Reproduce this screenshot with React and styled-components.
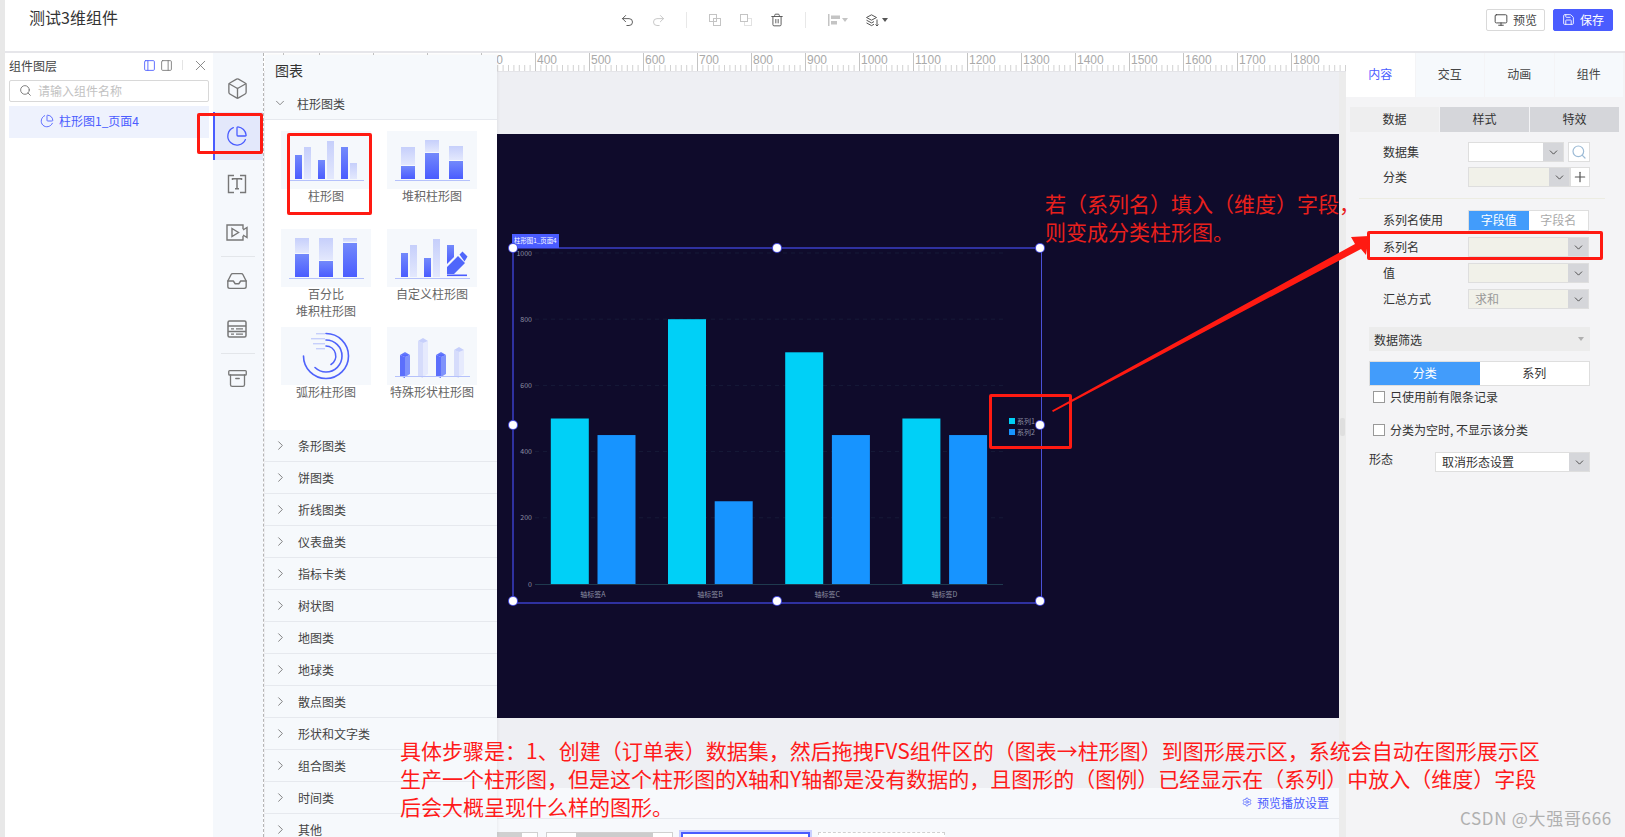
import { createGlobalStyle } from "styled-components";
import styled from "styled-components";
import {
  Archive,
  Box,
  ChartPie,
  ChevronDown,
  ChevronRight,
  Inbox,
  Monitor,
  PanelLeft,
  PanelRight,
  Plus,
  Redo2,
  Save,
  Search,
  Settings,
  Trash2,
  Undo2,
  X,
} from "lucide-react";

const FONT = `"Noto Sans CJK SC", "Liberation Sans", sans-serif`;
const BLUE = "#4a5cff";
const SKY = "#429cfb";

const GlobalStyle = createGlobalStyle`
  html, body {
    margin: 0;
    padding: 0;
    background: #fff;
    font-family: ${FONT};
    font-size: 12px;
    color: #333;
    overflow: hidden;
  }
  * { box-sizing: border-box; }
`;

const Page = styled.div`
  position: relative;
  display: flex;
  width: 1625px;
  height: 837px;
  overflow: hidden;
`;

const EdgeStrip = styled.div`
  width: 5px;
  flex: none;
  background: #e8e8e8;
`;

const Shell = styled.div`
  flex: 1;
  min-width: 0;
  display: flex;
  flex-direction: column;
`;

/* ---------- header ---------- */

const Header = styled.header`
  height: 53px;
  flex: none;
  display: flex;
  align-items: flex-start;
  background: #fff;
  border-bottom: 2px solid #e6e6ea;
`;

const Title = styled.div`
  width: 607px;
  padding: 5px 0 0 24px;
  font-size: 16px;
  line-height: 24px;
  color: #333;
`;

const Toolbar = styled.div`
  display: flex;
  align-items: center;
  gap: 1px;
  height: 20px;
  margin-top: 10px;
`;

const ToolButton = styled.span`
  display: flex;
  align-items: center;
  justify-content: center;
  gap: 2px;
  width: ${(p) => p.$w || 30}px;
  height: 20px;
  color: ${(p) => (p.$off ? "#c4c4c4" : "#555")};
`;

const ToolSep = styled.span`
  width: 1px;
  height: 16px;
  margin: 0 12px;
  background: #e8e8e8;
`;

const Caret = styled.span`
  width: 0;
  height: 0;
  border-left: 3px solid transparent;
  border-right: 3px solid transparent;
  border-top: 4px solid ${(p) => p.$color || "#555"};
`;

const Actions = styled.div`
  margin-left: auto;
  margin-right: 12px;
  margin-top: 9px;
  display: flex;
  gap: 8px;
`;

const ActionButton = styled.button`
  display: flex;
  align-items: center;
  justify-content: center;
  gap: 5px;
  width: ${(p) => (p.$primary ? 60 : 59)}px;
  height: 22px;
  padding: 0 0 1px;
  font: 12px ${FONT};
  border-radius: 2px;
  border: 1px solid ${(p) => (p.$primary ? BLUE : "#d9d9d9")};
  background: ${(p) => (p.$primary ? BLUE : "#fff")};
  color: ${(p) => (p.$primary ? "#fff" : "#444")};
`;

const Workspace = styled.div`
  flex: 1;
  min-height: 0;
  display: flex;
`;

/* ---------- layers panel ---------- */

const LayerPanel = styled.aside`
  width: 208px;
  flex: none;
  padding: 0 4px;
  background: #fff;
`;

const LayerHead = styled.div`
  height: 27px;
  display: flex;
  align-items: center;
  color: #444;
`;

const LayerTitle = styled.span`
  flex: 1;
  padding-bottom: 2px;
`;

const LayerTools = styled.div`
  display: flex;
  align-items: center;
  gap: 4px;
  margin-top: -3px;
  color: #777;
`;

const ToolsDivider = styled.span`
  width: 1px;
  height: 10px;
  margin: 0 5px;
  background: #e4e4e4;
`;

const LayerSearch = styled.div`
  display: flex;
  align-items: center;
  gap: 6px;
  height: 22px;
  padding: 0 0 2px 9px;
  border: 1px solid #d8d8d8;
  border-radius: 2px;
  color: #c2c2c2;
  svg {
    color: #666;
  }
`;

const LayerRow = styled.div`
  display: flex;
  align-items: center;
  gap: 5px;
  height: 32px;
  margin-top: 4px;
  padding: 0 0 3px 31px;
  background: #eef2fd;
  color: ${BLUE};
`;

/* ---------- icon rail ---------- */

const Rail = styled.nav`
  width: 50px;
  flex: none;
  padding-top: 11px;
  background: #f5f8fc;
`;

const RailItem = styled.div`
  height: 48px;
  display: flex;
  align-items: center;
  justify-content: center;
  padding-right: 4px;
  color: ${(p) => (p.$active ? BLUE : "#777")};
  background: ${(p) => (p.$active ? "#e3e8fb" : "transparent")};
  border-left: 2px solid ${(p) => (p.$active ? BLUE : "transparent")};
`;

const RailSep = styled.div`
  height: 1px;
  margin: 0 8px;
  background: #e3e6ea;
`;

/* ---------- centre ---------- */

const Main = styled.main`
  position: relative;
  flex: 1;
  min-width: 0;
  display: flex;
  flex-direction: column;
  border-left: 1px dashed #b5b5b5;
  background: #fff;
`;

const RulerBar = styled.svg`
  display: block;
  flex: none;
  width: 100%;
  height: 19px;
`;

const WorkArea = styled.div`
  position: relative;
  flex: 1;
  min-height: 0;
  display: flex;
  flex-direction: column;
  padding: 62px 0 0 233px;
  background: #eeeff3;
  border-right: 7px solid #ececec;
`;

const ScrollGrip = styled.span`
  position: absolute;
  right: -6px;
  top: 346px;
  width: 5px;
  height: 18px;
  border-radius: 2px;
  background: #dfdfdf;
`;

const Stage = styled.div`
  position: relative;
  flex: none;
  height: 584px;
  background: #0f0b2b;
`;

const SelectFrame = styled.div`
  position: absolute;
  left: 15px;
  top: 113px;
  width: 530px;
  height: 357px;
  border: 2px solid #2f31a0;
  border-right: 1px solid #4a50d8;
`;

const ChartSvg = styled.svg`
  position: absolute;
  left: -1px;
  top: -1px;
  width: 529px;
  height: 356px;
  overflow: visible;
`;

const FrameTag = styled.span`
  position: absolute;
  left: -2px;
  top: -15px;
  width: 47px;
  height: 14px;
  padding-left: 2px;
  font-size: 6.4px;
  line-height: 13px;
  color: #fff;
  white-space: nowrap;
  background: ${BLUE};
`;

const Handle = styled.span`
  position: absolute;
  left: ${(p) => p.$x}%;
  top: ${(p) => p.$y}%;
  width: 8px;
  height: 8px;
  margin: -5px 0 0 -5px;
  border-radius: 50%;
  background: #fff;
  box-shadow: 0 0 0 1px #4c50e0;
`;

const BottomBar = styled.div`
  flex: none;
  margin-top: 70px;
  height: 49px;
  background: #f7f9fc;
`;

const BarTop = styled.div`
  height: 31px;
  display: flex;
  align-items: center;
  justify-content: flex-end;
  gap: 5px;
  padding: 0 10px 2px 0;
  font-size: 12px;
  color: ${BLUE};
  border-bottom: 1px solid #e6e9ee;
`;

const Thumbs = styled.div`
  display: flex;
  gap: 8px;
  padding-top: 13px;
`;

const Thumb = styled.div`
  width: ${(p) => p.$w}px;
  height: 60px;
  flex: none;
  background: ${(p) => p.$fill || "#fff"};
  border: 1px ${(p) => (p.$dashed ? "dashed" : "solid")} #d0d0d0;
  ${(p) =>
    p.$selected &&
    `
    border: 2px solid ${BLUE};
    box-shadow: 0 0 0 2px #c9cfff;
  `}
`;

/* ---------- chart flyout ---------- */

const Flyout = styled.section`
  position: absolute;
  z-index: 1;
  left: 1px;
  top: 2px;
  bottom: 0;
  width: 232px;
  background: #f6f9fc;
  box-shadow: 1px 0 3px rgba(0, 0, 0, 0.06);
`;

const FlyoutTitle = styled.div`
  height: 34px;
  padding: 0 0 4px 10px;
  font-size: 14px;
  line-height: 30px;
  color: #333;
`;

const GroupHead = styled.div`
  display: flex;
  align-items: center;
  height: ${(p) => p.$h || 31}px;
  padding: 0 0 ${(p) => (p.$h ? 1 : 2)}px 8px;
  color: #444;
  border-bottom: 1px solid #e6e9ee;
  svg {
    flex: none;
    margin-right: 10px;
    color: #666;
  }
`;

const ChartGrid = styled.div`
  display: grid;
  grid-template-columns: 90px 90px;
  grid-auto-rows: 98px;
  column-gap: 16px;
  height: 310px;
  padding: 11px 0 0 16px;
  background: #fff;
`;

const ChartCard = styled.div`
  text-align: center;
  color: #666;
  line-height: 17px;
  svg {
    display: block;
    width: 90px;
    height: 58px;
    margin-bottom: -2px;
    background: #f5f8fc;
  }
`;

/* ---------- right panel ---------- */

const SidePanel = styled.aside`
  width: 279px;
  flex: none;
  background: #f4f4f6;
`;

const PanelTabs = styled.div`
  display: flex;
  gap: 1px;
  height: 44px;
  margin-right: 2px;
`;

const PanelTab = styled.div`
  flex: 1;
  display: flex;
  align-items: center;
  justify-content: center;
  padding-bottom: 3px;
  background: ${(p) => (p.$active ? "#fff" : "#f6f9fc")};
  color: ${(p) => (p.$active ? BLUE : "#444")};
`;

const SubTabs = styled.div`
  display: flex;
  gap: 1px;
  height: 25px;
  margin: 10px 6px 0 4px;
`;

const SubTab = styled.div`
  flex: 1;
  display: flex;
  align-items: center;
  justify-content: center;
  padding-bottom: 2px;
  background: ${(p) => (p.$active ? "#eeeeef" : "#d5d6da")};
  color: #333;
`;

const FormGroup = styled.div`
  display: flex;
  flex-direction: column;
  gap: ${(p) => p.$gap}px;
  margin-top: ${(p) => p.$top}px;
`;

const FormRow = styled.div`
  display: flex;
  align-items: center;
  padding-left: 37px;
  height: ${(p) => p.$h || 20}px;
`;

const FormLabel = styled.span`
  width: 85px;
  flex: none;
  padding-bottom: 2px;
  color: #333;
`;

const Select = styled.div`
  display: flex;
  width: ${(p) => p.$w || 121}px;
  height: 20px;
  flex: none;
  border: 1px solid #dedede;
`;

const SelectValue = styled.span`
  flex: 1;
  padding-left: ${(p) => p.$pad || 6}px;
  line-height: 17px;
  background: ${(p) => (p.$beige ? "#f1f1e9" : "#fff")};
  color: ${(p) => (p.$muted ? "#999" : "#333")};
`;

const SelectArrow = styled.span`
  width: 20px;
  display: flex;
  align-items: center;
  justify-content: center;
  background: #d5d6da;
  color: #3d3d3d;
`;

const SquareButton = styled.span`
  width: ${(p) => p.$w}px;
  height: 20px;
  margin-left: ${(p) => p.$gap}px;
  display: flex;
  align-items: center;
  justify-content: center;
  background: #fff;
  border: 1px solid #dedede;
  color: ${(p) => p.$color};
`;

const Divider = styled.div`
  height: 1px;
  margin: 11px 20px 0 13px;
  background: #ecece2;
`;

const Segmented = styled.div`
  display: flex;
  width: ${(p) => p.$w}px;
  height: ${(p) => p.$h}px;
  flex: none;
  border: 1px solid #dedede;
  background: #fff;
  ${(p) => p.$inset && "margin: 10px 0 0 23px;"}
`;

const Segment = styled.span`
  flex: 1;
  display: flex;
  align-items: center;
  justify-content: center;
  padding-bottom: 2px;
  background: ${(p) => (p.$active ? SKY : "#fff")};
  color: ${(p) => (p.$active ? "#fff" : p.$faded ? "#aaa" : "#333")};
`;

const FilterHead = styled.div`
  display: flex;
  align-items: center;
  justify-content: space-between;
  width: 221px;
  height: 24px;
  margin: 18px 0 0 23px;
  padding: 0 6px 0 5px;
  background: #ececec;
  color: #333;
`;

const CheckRow = styled.label`
  display: flex;
  align-items: center;
  gap: 5px;
  height: 12px;
  margin: ${(p) => p.$top}px 0 0 27px;
  color: #333;
`;

const CheckText = styled.span`
  margin-top: -2px;
`;

const CheckBox = styled.span`
  width: 12px;
  height: 12px;
  flex: none;
  background: #fff;
  border: 1px solid #999;
`;

const ShapeRow = styled.div`
  display: flex;
  margin: 16px 0 0 23px;
`;

const ShapeLabel = styled.span`
  width: 66px;
  line-height: 14px;
`;

/* ---------- annotations on top of the screenshot ---------- */

const RedBox = styled.div`
  position: absolute;
  z-index: 2;
  left: ${(p) => p.$x}px;
  top: ${(p) => p.$y}px;
  width: ${(p) => p.$w}px;
  height: ${(p) => p.$h}px;
  border: 3px solid #ff1a12;
  border-radius: 2px;
  pointer-events: none;
`;

const Note = styled.div`
  position: absolute;
  z-index: 2;
  left: ${(p) => p.$x}px;
  top: ${(p) => p.$y}px;
  font-size: 21px;
  line-height: ${(p) => p.$line}px;
  color: ${(p) => p.$color};
  white-space: nowrap;
`;

const ArrowLayer = styled.svg`
  position: absolute;
  z-index: 2;
  left: 0;
  top: 0;
  width: 1625px;
  height: 837px;
  pointer-events: none;
`;

const Watermark = styled.div`
  position: absolute;
  z-index: 3;
  right: 13px;
  bottom: 9px;
  font-size: 17px;
  line-height: 20px;
  letter-spacing: 0.7px;
  color: #b0b0b0;
`;

/* ---------- drawings ---------- */

const Ruler = () => {
  const minors = [];
  for (let x = 0; x < 1082; x += 5.4) minors.push(x + 1);
  const majors = [];
  for (let v = 100; v <= 1800; v += 100) majors.push(v);
  return (
    <RulerBar viewBox="263 53 1082 19">
      <rect x="263" y="71" width="1082" height="1" fill="#e4e4e8" />
      {minors.map((x) => (
        <rect key={x} x={263 + x} y="65" width="1" height="6" fill="#d2d2d2" />
      ))}
      {[282, 318].map((x) => (
        <rect key={x} x={x} y="53" width="1" height="18" fill="#c4c4c4" />
      ))}
      {majors.map((v) => {
        const x = 318 + v * 0.54;
        return (
          <g key={v}>
            <rect x={x} y="53" width="1" height="18" fill="#c4c4c4" />
            <text x={x + 2} y="63.5" fontSize="12" fill="#a9a9a9" fontFamily="Liberation Sans">
              {v}
            </text>
          </g>
        );
      })}
    </RulerBar>
  );
};

const VALUES = [
  [500, 450],
  [800, 250],
  [700, 450],
  [500, 450],
];
const yOf = (v) => 584 - v * 0.331;

const BarChart = () => (
  <ChartSvg viewBox="513 248 529 356" fontFamily={FONT}>
    {[200, 400, 600, 800, 1000].map((v) => (
      <line key={v} x1="535" x2="1003" y1={yOf(v)} y2={yOf(v)} stroke="#171a38" strokeDasharray="4 4" />
    ))}
    {[0, 200, 400, 600, 800, 1000].map((v) => (
      <text key={v} x="532" y={yOf(v) + 2.5} fontSize="7" fill="#8d8fa3" textAnchor="end">
        {v}
      </text>
    ))}
    <line x1="535" x2="1003" y1="584.5" y2="584.5" stroke="#1f3a4f" />
    {VALUES.map(([a, b], i) => {
      const x = 550.8 + i * 117.2;
      return (
        <g key={i}>
          <rect x={x} y={yOf(a)} width="38" height={584 - yOf(a)} fill="#00d0f7" />
          <rect x={x + 46.7} y={yOf(b)} width="38" height={584 - yOf(b)} fill="#1794ff" />
          <text x={x + 42} y="597" fontSize="7" fill="#8d8fa3" textAnchor="middle">
            {`轴标签${"ABCD"[i]}`}
          </text>
        </g>
      );
    })}
    <rect x="1009" y="418" width="6" height="6" fill="#00d0f7" />
    <rect x="1009" y="429" width="6" height="6" fill="#1794ff" />
    <text x="1017" y="423.5" fontSize="7" fill="#8d8fa3">系列1</text>
    <text x="1017" y="434.5" fontSize="7" fill="#8d8fa3">系列2</text>
  </ChartSvg>
);

const Thumbnail = ({ children, id }) => (
  <svg viewBox="0 0 90 58">
    <defs>
      <linearGradient id={`${id}d`} x1="0" y1="0" x2="0" y2="1">
        <stop offset="0" stopColor="#7389fb" />
        <stop offset="1" stopColor="#4a5cff" />
      </linearGradient>
      <linearGradient id={`${id}l`} x1="0" y1="0" x2="0" y2="1">
        <stop offset="0" stopColor="#c6cffb" />
        <stop offset="1" stopColor="#e3e8fd" />
      </linearGradient>
    </defs>
    {children}
  </svg>
);

const Baseline = () => <rect x="8" y="49" width="75" height="1" fill="#b5c1fb" />;

const BarsThumb = ({ id, bars }) => (
  <Thumbnail id={id}>
    {bars.map(([x, top, light]) => (
      <rect key={x} x={x} y={top} width="7" height={48 - top} fill={`url(#${id}${light ? "l" : "d"})`} />
    ))}
    <Baseline />
  </Thumbnail>
);

const StackThumb = ({ id, bars }) => (
  <Thumbnail id={id}>
    {bars.map(([x, top, mid]) => (
      <g key={x}>
        <rect x={x} y={top} width="14" height={mid - top} fill={`url(#${id}l)`} />
        <rect x={x} y={mid + 1} width="14" height={47 - mid} fill={`url(#${id}d)`} />
      </g>
    ))}
    <Baseline />
  </Thumbnail>
);

const PencilThumb = ({ id }) => (
  <Thumbnail id={id}>
    <rect x="14" y="24" width="7" height="24" fill={`url(#${id}d)`} />
    <rect x="23" y="16" width="7" height="32" fill={`url(#${id}l)`} />
    <rect x="37" y="29" width="7" height="19" fill={`url(#${id}d)`} />
    <rect x="46" y="10" width="7" height="38" fill={`url(#${id}l)`} />
    <path d="M60 16h7v12l-7 7z" fill={`url(#${id}d)`} />
    <path d="M60 38l11-11 7 7-11 11H60z M72.5 25.5l3-3 5 5-3 5z" fill="#4f66fb" />
    <rect x="60" y="45.5" width="20" height="1.6" fill={BLUE} />
    <Baseline />
  </Thumbnail>
);

const ArcThumb = ({ id }) => (
  <Thumbnail id={id}>
    <g fill="none" stroke="#4f63fb" strokeWidth="1.6" strokeLinecap="round">
      <path d="M45 6.5a22.5 22.5 0 1 1-22.5 22.5" />
      <path d="M45 13a16 16 0 0 1 0 32a16 16 0 0 1-11-4.5" />
      <path d="M45 19a10 10 0 0 1 5 18.5" />
    </g>
    <g fill="#c6cffb">
      <rect x="35" y="6" width="9" height="1.4" />
      <rect x="30" y="11" width="14" height="1.4" />
      <rect x="32" y="16" width="12" height="1.4" />
      <rect x="35" y="21" width="9" height="1.4" />
    </g>
  </Thumbnail>
);

const Prism = ({ x, top, light, id }) => (
  <g>
    <path d={`M${x} ${top + 3}l5 2v${46 - top}l-5-2z`} fill={light ? "#d6dcfb" : "#5c6ffc"} />
    <path d={`M${x + 5} ${top + 5}l5-2v${44 - top}l-5 3z`} fill={light ? "#e6eafd" : "#7f92fb"} />
    <path d={`M${x} ${top + 3}l5-3 5 3-5 2z`} fill={light ? "#c6cffb" : `url(#${id}d)`} />
  </g>
);

const PrismThumb = ({ id }) => (
  <Thumbnail id={id}>
    <Prism id={id} x={13} top={25} />
    <Prism id={id} x={31} top={11} light />
    <Prism id={id} x={49} top={25} />
    <Prism id={id} x={67} top={20} light />
    <Baseline />
  </Thumbnail>
);

const TextFrameIcon = () => (
  <svg width="20" height="20" viewBox="0 0 20 20" fill="none" stroke="currentColor" strokeWidth="1.4">
    <path d="M7 1.5H1.5v17H7M13 1.5h5.5v17H13" />
    <path d="M5.5 6V4.8h9V6M10 4.8v10M8 14.8h4" strokeWidth="1.5" />
  </svg>
);

const VideoIcon = () => (
  <svg width="22" height="17" viewBox="0 0 22 17" fill="none" stroke="currentColor" strokeWidth="1.4">
    <path d="M17 5V1H1v15h16v-4M17 6l4-2.5v10L17 11" />
    <path d="M6 4.5l6.5 4-6.5 4z" />
  </svg>
);

const RowsIcon = () => (
  <svg width="20" height="18" viewBox="0 0 20 18" fill="none" stroke="currentColor" strokeWidth="1.5">
    <rect x="1" y="1" width="18" height="16" rx="1.5" />
    <path d="M1 6h18M1 11.5h18" />
    <path d="M4 8.8h3M9 8.8h7M4 14.2h3M9 14.2h7" strokeWidth="1.2" />
  </svg>
);

const CopyIcon = () => (
  <svg width="12" height="12" viewBox="0 0 12 12" fill="none" stroke="currentColor">
    <rect x="0.5" y="0.5" width="7" height="7" />
    <rect x="4.5" y="4.5" width="7" height="7" />
  </svg>
);

const PasteIcon = () => (
  <svg width="12" height="12" viewBox="0 0 12 12" fill="none" stroke="currentColor">
    <rect x="0.5" y="0.5" width="7" height="7" />
    <path d="M7.5 4.5h4v7h-7v-4" strokeDasharray="1 1" />
  </svg>
);

const AlignIcon = () => (
  <svg width="12" height="12" viewBox="0 0 12 12" fill="currentColor">
    <rect x="0" y="0" width="1.5" height="12" />
    <rect x="3" y="1.5" width="9" height="3.5" />
    <rect x="3" y="7" width="6" height="3.5" />
  </svg>
);

const LayerOrderIcon = () => (
  <svg width="14" height="13" viewBox="0 0 14 13" fill="none" stroke="currentColor">
    <path d="M5.5 0.8L10.5 3.5L5.5 6.2L0.5 3.5Z" />
    <path d="M0.5 6.2L5.5 8.9L8 7.6M0.5 8.9L5.5 11.6L8 10.3" />
    <path d="M11 5.5V12M9.5 10.5L11 12L12.5 10.5" />
  </svg>
);

/* ---------- data ---------- */

const RAIL_TOP = [Box, ChartPie, TextFrameIcon, VideoIcon];
const RAIL_MID = [Inbox, RowsIcon];

const GROUPS = [
  "条形图类",
  "饼图类",
  "折线图类",
  "仪表盘类",
  "指标卡类",
  "树状图",
  "地图类",
  "地球类",
  "散点图类",
  "形状和文字类",
  "组合图类",
  "时间类",
  "其他",
];

const HANDLES = [
  [0, 0],
  [50, 0],
  [100, 0],
  [0, 50],
  [100, 50],
  [0, 100],
  [50, 100],
  [100, 100],
];

const Arrow = () => <ChevronDown size={13} strokeWidth={1.6} />;

const App = () => (
  <Page>
    <GlobalStyle />
    <EdgeStrip />
    <Shell>
      <Header>
        <Title>测试3维组件</Title>
        <Toolbar>
          <ToolButton>
            <Undo2 size={15} strokeWidth={1.5} />
          </ToolButton>
          <ToolButton $off>
            <Redo2 size={15} strokeWidth={1.5} />
          </ToolButton>
          <ToolSep />
          <ToolButton $off>
            <CopyIcon />
          </ToolButton>
          <ToolButton $off>
            <PasteIcon />
          </ToolButton>
          <ToolButton>
            <Trash2 size={14} strokeWidth={1.6} />
          </ToolButton>
          <ToolSep />
          <ToolButton $w={38} $off>
            <AlignIcon />
            <Caret $color="#c4c4c4" />
          </ToolButton>
          <ToolButton $w={38}>
            <LayerOrderIcon />
            <Caret />
          </ToolButton>
        </Toolbar>
        <Actions>
          <ActionButton>
            <Monitor size={14} strokeWidth={1.6} />
            预览
          </ActionButton>
          <ActionButton $primary>
            <Save size={13} strokeWidth={1.6} />
            保存
          </ActionButton>
        </Actions>
      </Header>

      <Workspace>
        <LayerPanel>
          <LayerHead>
            <LayerTitle>组件图层</LayerTitle>
            <LayerTools>
              <PanelLeft size={13} color={BLUE} strokeWidth={1.6} />
              <PanelRight size={13} strokeWidth={1.6} />
              <ToolsDivider />
              <X size={17} strokeWidth={1.2} />
            </LayerTools>
          </LayerHead>
          <LayerSearch>
            <Search size={13} strokeWidth={1.5} />
            请输入组件名称
          </LayerSearch>
          <LayerRow>
            <ChartPie size={14} strokeWidth={1.5} />
            柱形图1_页面4
          </LayerRow>
        </LayerPanel>

        <Rail>
          {RAIL_TOP.map((Icon, i) => (
            <RailItem key={i} $active={i === 1}>
              <Icon size={i === 1 ? 22 : 23} strokeWidth={1.4} />
            </RailItem>
          ))}
          <RailSep />
          {RAIL_MID.map((Icon, i) => (
            <RailItem key={i}>
              <Icon size={22} strokeWidth={1.5} />
            </RailItem>
          ))}
          <RailSep />
          <RailItem>
            <Archive size={21} strokeWidth={1.5} />
          </RailItem>
        </Rail>

        <Main>
          <Ruler />
          <WorkArea>
            <Stage>
              <SelectFrame>
                <FrameTag>柱形图1_页面4</FrameTag>
                <BarChart />
                {HANDLES.map(([x, y]) => (
                  <Handle key={`${x}-${y}`} $x={x} $y={y} />
                ))}
              </SelectFrame>
            </Stage>
            <BottomBar>
              <BarTop>
                <Settings size={10} strokeWidth={1.8} />
                预览播放设置
              </BarTop>
              <Thumbs>
                <Thumb $w={41} $fill="linear-gradient(90deg, #d0d0d0 62%, #fff 62%)" />
                <Thumb $w={127} $fill="linear-gradient(90deg, #fff 23%, #ccc 23%, #ccc 85%, #fff 85%)" />
                <Thumb $w={129} $selected />
                <Thumb $w={127} $dashed />
              </Thumbs>
            </BottomBar>
            <ScrollGrip />
          </WorkArea>

          <Flyout>
            <FlyoutTitle>图表</FlyoutTitle>
            <GroupHead>
              <ChevronDown size={14} strokeWidth={1.3} />
              柱形图类
            </GroupHead>
            <ChartGrid>
              <ChartCard>
                <BarsThumb
                  id="a"
                  bars={[
                    [14, 24],
                    [23, 16, true],
                    [37, 29],
                    [46, 10, true],
                    [60, 16],
                    [69, 32, true],
                  ]}
                />
                柱形图
              </ChartCard>
              <ChartCard>
                <StackThumb
                  id="b"
                  bars={[
                    [14, 16, 34],
                    [38, 9, 21],
                    [62, 15, 29],
                  ]}
                />
                堆积柱形图
              </ChartCard>
              <ChartCard>
                <StackThumb
                  id="c"
                  bars={[
                    [14, 9, 24],
                    [38, 9, 31],
                    [62, 9, 13],
                  ]}
                />
                百分比
                <br />
                堆积柱形图
              </ChartCard>
              <ChartCard>
                <PencilThumb id="d" />
                自定义柱形图
              </ChartCard>
              <ChartCard>
                <ArcThumb id="e" />
                弧形柱形图
              </ChartCard>
              <ChartCard>
                <PrismThumb id="f" />
                特殊形状柱形图
              </ChartCard>
            </ChartGrid>
            {GROUPS.map((name) => (
              <GroupHead key={name} $h={32}>
                <ChevronRight size={15} strokeWidth={1.3} />
                {name}
              </GroupHead>
            ))}
          </Flyout>
        </Main>

        <SidePanel>
          <PanelTabs>
            <PanelTab $active>内容</PanelTab>
            <PanelTab>交互</PanelTab>
            <PanelTab>动画</PanelTab>
            <PanelTab>组件</PanelTab>
          </PanelTabs>
          <SubTabs>
            <SubTab $active>数据</SubTab>
            <SubTab>样式</SubTab>
            <SubTab>特效</SubTab>
          </SubTabs>

          <FormGroup $gap={5} $top={10}>
            <FormRow>
              <FormLabel>数据集</FormLabel>
              <Select $w={96}>
                <SelectValue />
                <SelectArrow>
                  <Arrow />
                </SelectArrow>
              </Select>
              <SquareButton $w={22} $gap={4} $color="#9dbbd6">
                <Search size={16} strokeWidth={1.8} />
              </SquareButton>
            </FormRow>
            <FormRow>
              <FormLabel>分类</FormLabel>
              <Select $w={102}>
                <SelectValue $beige />
                <SelectArrow>
                  <Arrow />
                </SelectArrow>
              </Select>
              <SquareButton $w={20} $gap={0} $color="#555">
                <Plus size={16} strokeWidth={1.8} />
              </SquareButton>
            </FormRow>
          </FormGroup>

          <Divider />

          <FormGroup $gap={6} $top={10}>
            <FormRow $h={22}>
              <FormLabel>系列名使用</FormLabel>
              <Segmented $w={121} $h={21}>
                <Segment $active>字段值</Segment>
                <Segment $faded>字段名</Segment>
              </Segmented>
            </FormRow>
            <FormRow>
              <FormLabel>系列名</FormLabel>
              <Select>
                <SelectValue $beige />
                <SelectArrow>
                  <Arrow />
                </SelectArrow>
              </Select>
            </FormRow>
            <FormRow>
              <FormLabel>值</FormLabel>
              <Select>
                <SelectValue $beige />
                <SelectArrow>
                  <Arrow />
                </SelectArrow>
              </Select>
            </FormRow>
            <FormRow>
              <FormLabel>汇总方式</FormLabel>
              <Select>
                <SelectValue $beige $muted>
                  求和
                </SelectValue>
                <SelectArrow>
                  <Arrow />
                </SelectArrow>
              </Select>
            </FormRow>
          </FormGroup>

          <FilterHead>
            数据筛选
            <Caret $color="#b0b0b0" />
          </FilterHead>
          <Segmented $w={221} $h={25} $inset>
            <Segment $active>分类</Segment>
            <Segment>系列</Segment>
          </Segmented>
          <CheckRow $top={5}>
            <CheckBox />
            <CheckText>只使用前有限条记录</CheckText>
          </CheckRow>
          <CheckRow $top={21}>
            <CheckBox />
            <CheckText>分类为空时, 不显示该分类</CheckText>
          </CheckRow>
          <ShapeRow>
            <ShapeLabel>形态</ShapeLabel>
            <Select $w={155}>
              <SelectValue>取消形态设置</SelectValue>
              <SelectArrow>
                <Arrow />
              </SelectArrow>
            </Select>
          </ShapeRow>
        </SidePanel>
      </Workspace>
    </Shell>

    <RedBox $x={197} $y={113} $w={66} $h={41} />
    <RedBox $x={287} $y={133} $w={85} $h={82} />
    <RedBox $x={1367} $y={231} $w={236} $h={29} />
    <RedBox $x={989} $y={394} $w={83} $h={55} />
    <ArrowLayer viewBox="0 0 1625 837">
      <path d="M1052 410.5L1355 244L1351 237L1369 236L1366 255L1361 249L1053 412Z" fill="#ff1a12" />
    </ArrowLayer>
    <Note $x={1045} $y={189} $line={28} $color="#e8201c">
      若（系列名）填入（维度）字段，
      <br />
      则变成分类柱形图。
    </Note>
    <Note $x={400} $y={736} $line={28} $color="#ff1a1a">
      具体步骤是：1、创建（订单表）数据集，然后拖拽FVS组件区的（图表→柱形图）到图形展示区，系统会自动在图形展示区
      <br />
      生产一个柱形图，但是这个柱形图的X轴和Y轴都是没有数据的，且图形的（图例）已经显示在（系列）中放入（维度）字段
      <br />
      后会大概呈现什么样的图形。
    </Note>
    <Watermark>CSDN @大强哥666</Watermark>
  </Page>
);

export default App;
